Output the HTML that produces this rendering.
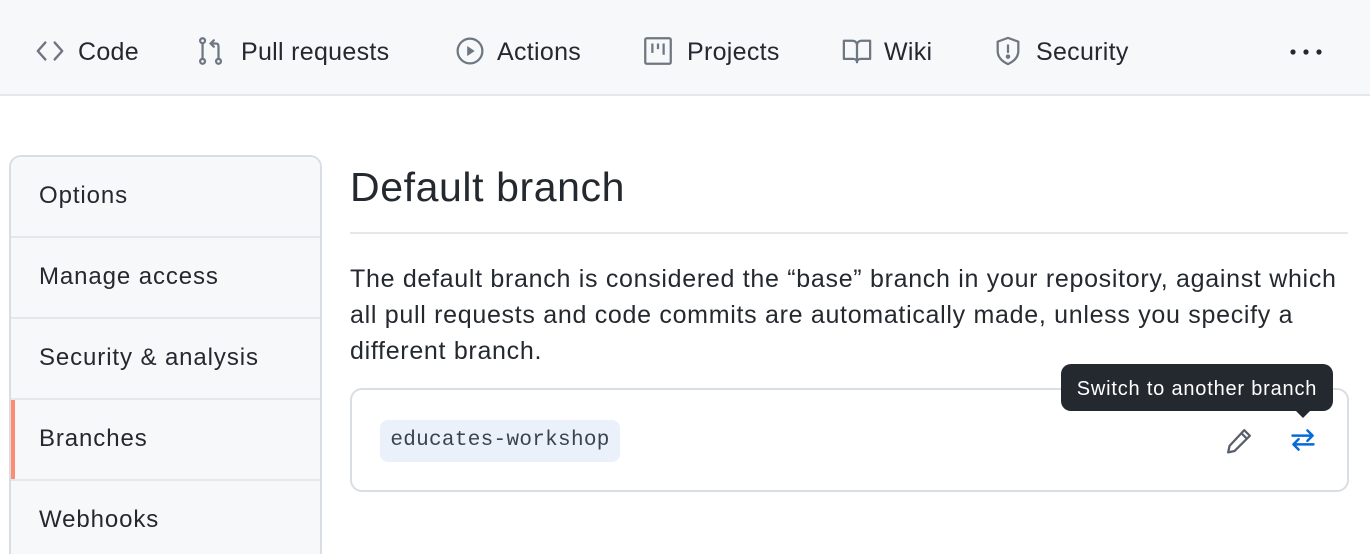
<!DOCTYPE html>
<html><head><style>
*{margin:0;padding:0;box-sizing:border-box}
html,body{width:1370px;height:554px;overflow:hidden}
body{background:#fff;font-family:"Liberation Sans",sans-serif;color:#24292f;position:relative}
.nav{position:absolute;left:0;top:0;width:1370px;height:96px;background:#f6f8fa;border-bottom:2px solid #e5e8eb}
.ni{position:absolute;top:35px;font-size:25px;line-height:34px;color:#24292f;letter-spacing:0.3px}
.ic{position:absolute;top:36px}
.side{position:absolute;left:9px;top:155px;width:313px;height:430px;border:2px solid #d8dee4;border-radius:12px;overflow:hidden;background:#fff}
.row{height:81px;border-bottom:2px solid #e5e8eb;font-size:24px;padding-left:28px;line-height:78px;background:#f6f8fa;position:relative;letter-spacing:0.9px}
.row.sel:before{content:"";position:absolute;left:0;top:0;bottom:0;width:4px;background:#fd8c73}
h1{position:absolute;left:350px;top:162px;font-size:41px;font-weight:normal;line-height:50px;letter-spacing:0.6px}
.hr{position:absolute;left:350px;top:232px;width:998px;height:2px;background:#e5e8eb}
p{position:absolute;left:350px;top:261px;width:1020px;font-size:25px;line-height:36px;letter-spacing:0.7px}
.box{position:absolute;left:350px;top:388px;width:999px;height:104px;border:2px solid #d8dee4;border-radius:12px}
.pill{position:absolute;left:380px;top:420px;width:240px;height:42px;background:#eaf1fa;border-radius:8px;font-family:"Liberation Mono",monospace;font-size:21px;line-height:42px;text-align:center;color:#3b434b;letter-spacing:0.3px}
.tip{position:absolute;left:1061px;top:364px;width:272px;height:47px;background:#24292f;border-radius:10px;color:#fff;font-size:20px;line-height:50px;text-align:center;letter-spacing:0.8px}
.tip:after{content:"";position:absolute;left:235px;top:47px;border:7px solid transparent;border-top-color:#24292f}
</style></head><body>
<div class="nav">
<svg class="ic" style="left:35px" width="30" height="30" viewBox="0 0 16 16" fill="none" stroke="#6e7781" stroke-width="1.3" stroke-linecap="round" stroke-linejoin="round"><path d="M5.5 3.5L1.5 8l4 4.5M10.5 3.5l4 4.5-4 4.5"/></svg>
<span class="ni" style="left:78px">Code</span>
<svg class="ic" style="left:196px" width="30" height="30" viewBox="0 0 16 16" fill="none" stroke="#6e7781" stroke-width="1.2" stroke-linecap="round"><circle cx="3.5" cy="2.5" r="1.3"/><circle cx="3.5" cy="13.5" r="1.3"/><circle cx="12" cy="13.5" r="1.3"/><path d="M3.5 4v8M12 12V5.5c0-1-0.5-1.5-1.5-1.5H8M9.5 2.3L7.8 4l1.7 1.7"/></svg>
<span class="ni" style="left:241px">Pull requests</span>
<svg class="ic" style="left:455px" width="30" height="30" viewBox="0 0 16 16" fill="none" stroke="#6e7781" stroke-width="1.2"><circle cx="8" cy="8" r="6.6"/><path d="M6.5 5.3v5.4L10.5 8z" fill="#6e7781" stroke="none"/></svg>
<span class="ni" style="left:497px">Actions</span>
<svg class="ic" style="left:643px" width="30" height="30" viewBox="0 0 16 16" fill="none" stroke="#6e7781" stroke-width="1.2"><rect x="1.2" y="1.2" width="13.6" height="13.6" rx="0.8"/><path d="M5 4v5M8 4v3M11 4v6"/></svg>
<span class="ni" style="left:687px">Projects</span>
<svg class="ic" style="left:842px" width="30" height="30" viewBox="0 0 16 16" fill="none" stroke="#6e7781" stroke-width="1.2" stroke-linejoin="round"><path d="M1 2.5h4.5C7 2.5 8 3.5 8 5v9c0-1-.8-1.8-2-1.8H1zM15 2.5h-4.5C9 2.5 8 3.5 8 5v9c0-1 .8-1.8 2-1.8h5z"/></svg>
<span class="ni" style="left:884px">Wiki</span>
<svg class="ic" style="left:993px" width="30" height="30" viewBox="0 0 16 16" fill="none" stroke="#6e7781" stroke-width="1.2" stroke-linejoin="round"><path d="M8 1L2.5 3v5c0 3.5 2.7 5.7 5.5 7 2.8-1.3 5.5-3.5 5.5-7V3z"/><path d="M8 5v3.5" stroke-linecap="round"/><circle cx="8" cy="11" r=".6" fill="#6e7781"/></svg>
<span class="ni" style="left:1036px">Security</span>
<svg class="ic" style="left:1289px;top:44px" width="34" height="16" viewBox="0 0 34 16"><circle cx="4" cy="8" r="2.6" fill="#24292f"/><circle cx="17" cy="8" r="2.6" fill="#24292f"/><circle cx="30" cy="8" r="2.6" fill="#24292f"/></svg>
</div>
<div class="side">
<div class="row">Options</div>
<div class="row">Manage access</div>
<div class="row">Security &amp; analysis</div>
<div class="row sel">Branches</div>
<div class="row">Webhooks</div>
</div>
<h1>Default branch</h1>
<div class="hr"></div>
<p>The default branch is considered the “base” branch in your repository, against which all pull requests and code commits are automatically made, unless you specify a different branch.</p>
<div class="box"></div>
<div class="pill">educates-workshop</div>
<svg style="position:absolute;left:1225px;top:427px" width="28" height="28" viewBox="0 0 16 16" fill="none" stroke="#57606a" stroke-width="1.3" stroke-linejoin="round"><path d="M11 1.8l3.2 3.2L5.5 13.7 1.8 14.5l.8-3.7z"/><path d="M9.3 3.5l3.2 3.2"/></svg>
<svg style="position:absolute;left:1289px;top:426px" width="28" height="28" viewBox="0 0 16 16" fill="none" stroke="#0969da" stroke-width="1.4" stroke-linecap="round" stroke-linejoin="round"><path d="M2 5.5h11.5M10.5 2.5l3 3-3 3M14 10.5H2.5M5.5 7.5l-3 3 3 3"/></svg>
<div class="tip">Switch to another branch</div>
</body></html>
